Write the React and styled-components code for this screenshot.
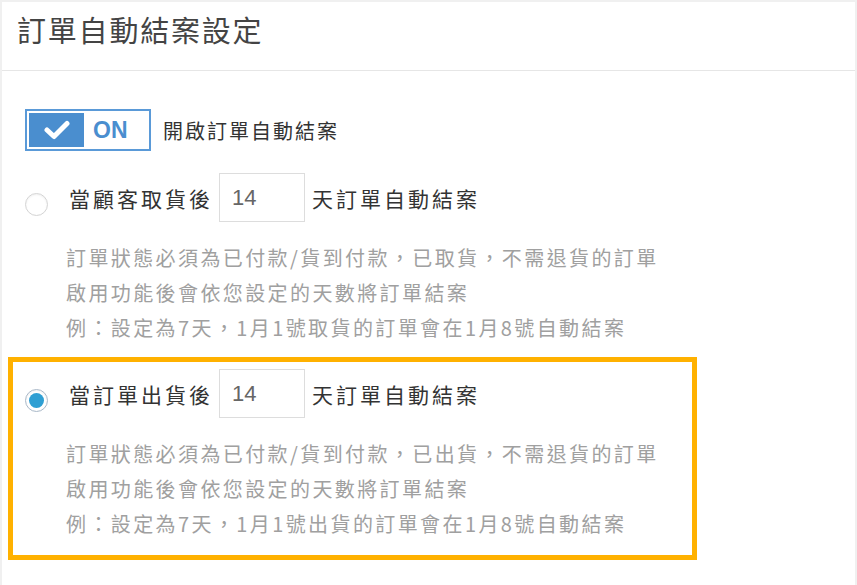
import React from 'react';
import styled, { createGlobalStyle } from 'styled-components';

const GlobalStyle = createGlobalStyle`
  html, body {
    margin: 0;
    padding: 0;
    background-color: #f0f0f0;
    font-family: "Noto Sans CJK TC", "Liberation Sans", sans-serif;
  }
`;

const Page = styled.div`
  padding: 2px 2px 3px 2px;
`;

const Panel = styled.div`
  background-color: white;
`;

const Header = styled.div`
  box-sizing: border-box;
  height: 69px;
  padding: 8px 0 0 15px;
  border-bottom: 1px solid #e6e6e6;

  line-height: 38px;
  font-size: 29px;
  letter-spacing: 1.8px;
  color: #444;
`;

const Body = styled.div`
  padding: 38px 0 25px 23px;
`;

const ToggleRow = styled.div`
  display: flex;
  flex-direction: row;
  align-items: center;
`;

const Toggle = styled.div`
  width: 118px;
  height: 34px;
  padding: 2px;
  border: 2px solid #5a9ad8;

  display: flex;
  flex-direction: row;
  align-items: stretch;
`;

const ToggleKnob = styled.div`
  width: 55px;
  background-color: #4a8ecf;

  display: flex;
  align-items: center;
  justify-content: center;
`;

const ToggleText = styled.div`
  padding-left: 9px;

  display: flex;
  align-items: center;

  font-family: "Liberation Sans", sans-serif;
  font-weight: bold;
  font-size: 23px;
  color: #4a8ecf;
`;

const Label = styled.div`
  padding-left: ${props => props.gap || 0}px;
  font-size: ${props => props.size || 20}px;
  letter-spacing: ${props => props.spacing || 2}px;
  color: #333;
  white-space: nowrap;
`;

const Option = styled.div`
  margin-left: ${props => props.active ? -17 : 0}px;
  margin-top: ${props => props.active ? 12 : 22}px;
  padding: ${props => props.active ? '7px 0 14px 12px' : '0'};
  width: ${props => props.active ? '667px' : 'auto'};
  border: ${props => props.active ? '5px solid #ffb100' : 'none'};
`;

const OptionRow = styled.div`
  display: flex;
  flex-direction: row;
  align-items: center;
`;

const Radio = styled.div`
  width: 21px;
  height: 21px;
  margin-top: 14px;
  border-radius: 50%;
  border: 1px solid ${props => props.checked ? '#a9b8c8' : '#d4d4d4'};
  background-color: white;
  box-shadow: inset 0 1px 2px rgba(0, 0, 0, 0.06);

  display: flex;
  align-items: center;
  justify-content: center;
`;

const RadioDot = styled.div`
  width: 15px;
  height: 15px;
  border-radius: 50%;
  background-color: #2f9fd3;
`;

const DaysInput = styled.div`
  width: 72px;
  height: 47px;
  margin: 0 7px 0 6px;
  padding-left: 12px;
  border: 1px solid #ddd;

  display: flex;
  align-items: center;

  font-family: "Liberation Sans", sans-serif;
  font-size: 22px;
  color: #666;
`;

const Notes = styled.div`
  margin-top: 18px;
  padding-left: 41px;
`;

const NoteLine = styled.div`
  height: 35px;
  line-height: 35px;
  font-size: 20px;
  letter-spacing: 2.4px;
  color: #a0a0a0;
  white-space: nowrap;
`;

const CheckIcon = () => (
  <svg width="26" height="20" viewBox="0 0 26 20">
    <path d="M3 10 L10 16.5 L23 3.5" fill="none" stroke="white" strokeWidth="5" strokeLinecap="round" strokeLinejoin="round" />
  </svg>
);

const options = [
  {
    key: 'pickup',
    before: '當顧客取貨後',
    notes: [
      '訂單狀態必須為已付款/貨到付款，已取貨，不需退貨的訂單',
      '啟用功能後會依您設定的天數將訂單結案',
      '例：設定為7天，1月1號取貨的訂單會在1月8號自動結案',
    ],
  },
  {
    key: 'shipped',
    before: '當訂單出貨後',
    active: true,
    notes: [
      '訂單狀態必須為已付款/貨到付款，已出貨，不需退貨的訂單',
      '啟用功能後會依您設定的天數將訂單結案',
      '例：設定為7天，1月1號出貨的訂單會在1月8號自動結案',
    ],
  },
];

const App = () => (
  <Page>
    <GlobalStyle />
    <Panel>
      <Header>訂單自動結案設定</Header>
      <Body>
        <ToggleRow>
          <Toggle>
            <ToggleKnob>
              <CheckIcon />
            </ToggleKnob>
            <ToggleText>ON</ToggleText>
          </Toggle>
          <Label gap={12}>開啟訂單自動結案</Label>
        </ToggleRow>
        {options.map(opt => (
          <Option key={opt.key} active={opt.active}>
            <OptionRow>
              <Radio checked={opt.active}>
                {opt.active && <RadioDot />}
              </Radio>
              <Label gap={21} size={21} spacing={3}>{opt.before}</Label>
              <DaysInput>14</DaysInput>
              <Label size={21} spacing={3}>天訂單自動結案</Label>
            </OptionRow>
            <Notes>
              {opt.notes.map(line => (
                <NoteLine key={line}>{line}</NoteLine>
              ))}
            </Notes>
          </Option>
        ))}
      </Body>
    </Panel>
  </Page>
);

export default App;
